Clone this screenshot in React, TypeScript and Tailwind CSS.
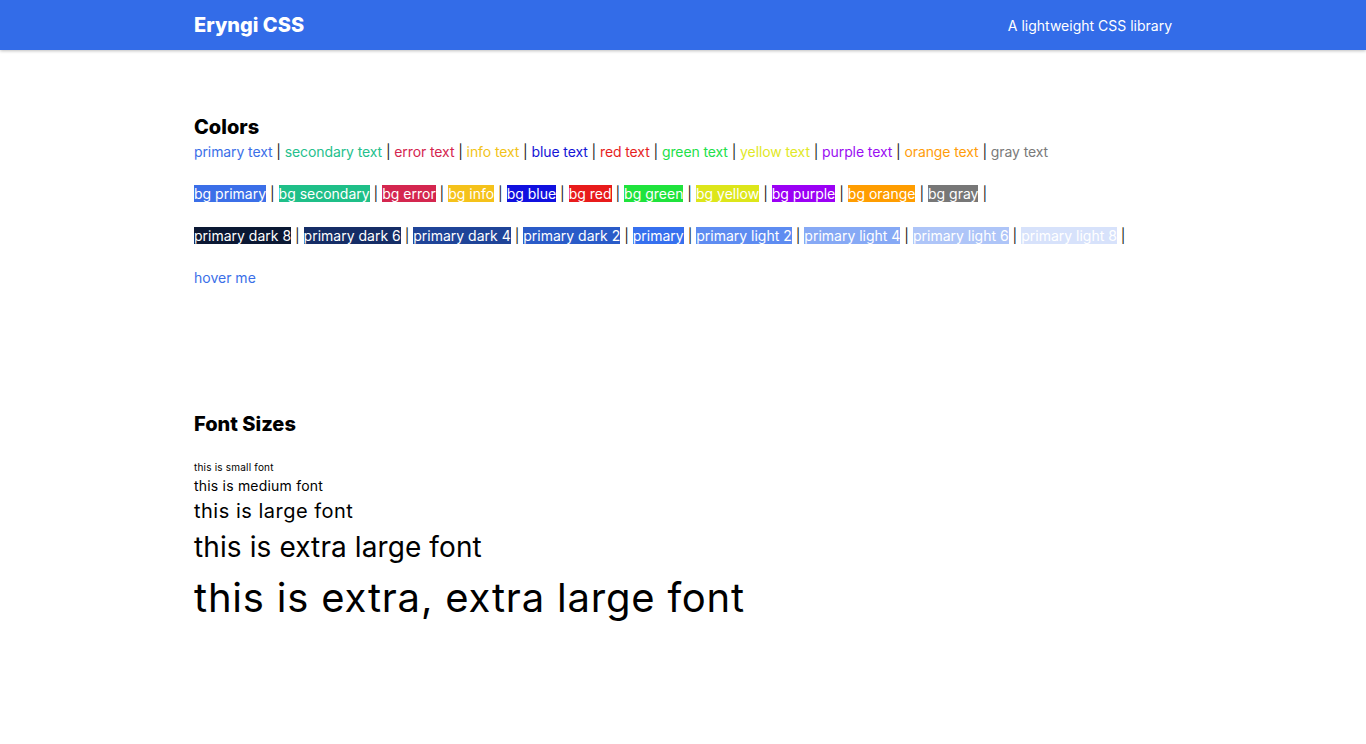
import * as React from 'react'

const textColors = [
  { name: 'primary text', cls: 'text-[#3b6fe8]' },
  { name: 'secondary text', cls: 'text-[#25c08d]' },
  { name: 'error text', cls: 'text-[#d4264f]' },
  { name: 'info text', cls: 'text-[#f2c318]' },
  { name: 'blue text', cls: 'text-[#1414d6]' },
  { name: 'red text', cls: 'text-[#e61e1e]' },
  { name: 'green text', cls: 'text-[#22e04a]' },
  { name: 'yellow text', cls: 'text-[#e1e826]' },
  { name: 'purple text', cls: 'text-[#9a0ef2]' },
  { name: 'orange text', cls: 'text-[#ff9d0a]' },
  { name: 'gray text', cls: 'text-[#7a7a7a]' },
]

const bgColors = [
  { name: 'bg primary', cls: 'bg-[#3b6fe8]' },
  { name: 'bg secondary', cls: 'bg-[#1fbf88]' },
  { name: 'bg error', cls: 'bg-[#d4264f]' },
  { name: 'bg info', cls: 'bg-[#f5c21a]' },
  { name: 'bg blue', cls: 'bg-[#1010df]' },
  { name: 'bg red', cls: 'bg-[#e81b1b]' },
  { name: 'bg green', cls: 'bg-[#1fe33c]' },
  { name: 'bg yellow', cls: 'bg-[#dde61a]' },
  { name: 'bg purple', cls: 'bg-[#9b00f5]' },
  { name: 'bg orange', cls: 'bg-[#ff9d00]' },
  { name: 'bg gray', cls: 'bg-[#777777]' },
]

const shades = [
  { name: 'primary dark 8', cls: 'bg-[#0b1833]' },
  { name: 'primary dark 6', cls: 'bg-[#152d66]' },
  { name: 'primary dark 4', cls: 'bg-[#1f4498]' },
  { name: 'primary dark 2', cls: 'bg-[#2a5bc8]' },
  { name: 'primary', cls: 'bg-[#3670ee]' },
  { name: 'primary light 2', cls: 'bg-[#5e8cf1]' },
  { name: 'primary light 4', cls: 'bg-[#86a9f5]' },
  { name: 'primary light 6', cls: 'bg-[#aec5f8]' },
  { name: 'primary light 8', cls: 'bg-[#d7e2fb]' },
]

export default function App() {
  return (
    <div className="min-h-[744px] bg-white text-black font-['Inter',sans-serif]">
      <header className="h-[50px] bg-[#336ce8] shadow-[0_1px_3px_rgba(0,0,0,0.25)]">
        <div className="max-w-[978px] mx-auto h-full flex items-center justify-between text-white">
          <span className="text-[20px] font-extrabold">Eryngi CSS</span>
          <span className="text-[14px]">A lightweight CSS library</span>
        </div>
      </header>

      <main className="max-w-[978px] mx-auto pt-[63px] text-[14px] leading-[1.5]">
        <section>
          <h2 className="text-[20px] font-extrabold leading-[28px]">Colors</h2>
          <p className="mb-[21px] tracking-[-0.1px]">
            {textColors.map((c, i) => (
              <React.Fragment key={c.name}>
                <span className={c.cls}>{c.name}</span>
                {i < textColors.length - 1 && <span className="text-[#222]"> | </span>}
              </React.Fragment>
            ))}
          </p>
          <p className="mb-[21px]">
            {bgColors.map(c => (
              <React.Fragment key={c.name}>
                <span className={`${c.cls} text-white`}>{c.name}</span>
                <span className="text-[#222]"> | </span>
              </React.Fragment>
            ))}
          </p>
          <p className="mb-[21px]">
            {shades.map(c => (
              <React.Fragment key={c.name}>
                <span className={`${c.cls} text-white`}>{c.name}</span>
                <span className="text-[#222]"> | </span>
              </React.Fragment>
            ))}
          </p>
          <p>
            <a className="text-[#3b6fe8] hover:text-[#1f4498] cursor-pointer">hover me</a>
          </p>
        </section>

        <section className="mt-[122px]">
          <h2 className="text-[20px] font-extrabold leading-[28px] mb-[22px]">Font Sizes</h2>
          <p className="text-[10px] leading-[15px] tracking-[0.2px]">this is small font</p>
          <p className="text-[14px] leading-[21px] tracking-[0.2px]">this is medium font</p>
          <p className="text-[20px] leading-[30px] tracking-[0.5px]">this is large font</p>
          <p className="text-[28px] leading-[42px] tracking-[0.1px]">this is extra large font</p>
          <p className="text-[40px] leading-[60px] tracking-[0.8px]">this is extra, extra large font</p>
        </section>
      </main>
    </div>
  )
}
